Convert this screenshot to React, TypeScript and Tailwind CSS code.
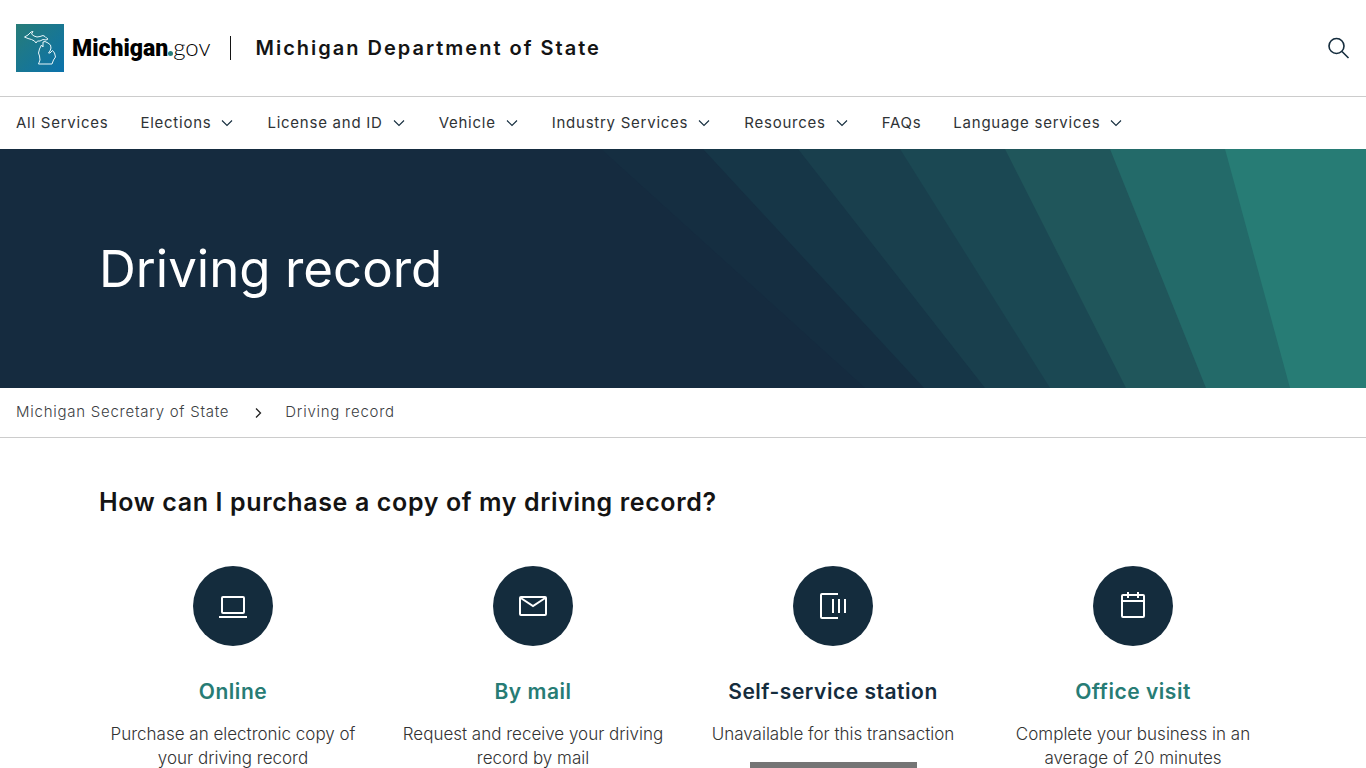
import React from 'react';

const navItems = [
  { label: 'All Services', menu: false },
  { label: 'Elections', menu: true },
  { label: 'License and ID', menu: true },
  { label: 'Vehicle', menu: true },
  { label: 'Industry Services', menu: true },
  { label: 'Resources', menu: true },
  { label: 'FAQs', menu: false },
  { label: 'Language services', menu: true },
];

// Stripes of the hero banner, from left to right
const stripes = [
  { points: '601,0 865,239 1366,239 1366,0', fill: '#152e41' },
  { points: '703,0 924,239 1366,239 1366,0', fill: '#163647' },
  { points: '798,0 985,239 1366,239 1366,0', fill: '#193f4d' },
  { points: '900,0 1050,239 1366,239 1366,0', fill: '#1b4853' },
  { points: '1005,0 1126,239 1366,239 1366,0', fill: '#20565b' },
  { points: '1110,0 1206,239 1366,239 1366,0', fill: '#236a69' },
  { points: '1225,0 1290,239 1366,239 1366,0', fill: '#277c75' },
];

const cards = [
  {
    title: 'Online',
    text: 'Purchase an electronic copy of your driving record',
    available: true,
    icon: (
      <>
        <rect x="6" y="8" width="22" height="16" rx="1" />
        <path d="M3 28H31" />
      </>
    ),
  },
  {
    title: 'By mail',
    text: 'Request and receive your driving record by mail',
    available: true,
    icon: (
      <>
        <rect x="4" y="8" width="26" height="18" rx="1" />
        <path d="M4 8.500L17 17L30 8.500" />
      </>
    ),
  },
  {
    title: 'Self-service station',
    text: 'Unavailable for this transaction',
    available: false,
    icon: <path d="M22 5H6Q5 5 5 6V28Q5 29 6 29H22M17 10V24M23 10V24M29 10V24" />,
  },
  {
    title: 'Office visit',
    text: 'Complete your business in an average of 20 minutes',
    available: true,
    icon: (
      <>
        <rect x="6" y="6" width="22" height="22" rx="1" />
        <path d="M6 12H28M12 3V9M22 3V9" />
      </>
    ),
  },
];

const Logo: React.FC = () => (
  <a href="#" aria-label="Michigan.gov" className="flex items-center gap-2">
    <svg className="h-12 w-12" viewBox="0 0 48 48" fill="none">
      <defs>
        <linearGradient id="logo" x1="0" y1="0" x2="1" y2="1">
          <stop offset="0" stopColor="#277c78" />
          <stop offset="1" stopColor="#0b72ac" />
        </linearGradient>
      </defs>
      <rect width="48" height="48" fill="url(#logo)" />
      <g stroke="#e8f6fa" strokeWidth="1" strokeLinejoin="round">
        {/* upper peninsula */}
        <path d="M8.500 13L12 11L15 8L17 7.500L15.500 10L18 12L21 13L24 12.500L27 11.500L29 12.500L30.500 14L32 15L30 16L27 15.500L24 17L21.500 17L20 19L18.500 17L15.500 15.500L12 14.500Z" />
        {/* lower peninsula */}
        <path d="M27 18L29 17.500L32 19L34.500 21L35 24L34 27L32.500 29L34 29L36.500 26.500L38.500 29L39.500 33L37.500 36L36 40H30L22.500 40L24 36L23.500 32L22.500 29L23.500 25L25.500 21L27 23Z" />
      </g>
    </svg>
    <span className="flex items-baseline font-['Roboto',sans-serif] text-[23px] leading-6 text-black">
      <b className="font-black">Michigan</b>
      <span className="h-[5px] w-[5px] rounded-full bg-[#277c78]" />
      <span className="font-['Lato',sans-serif] text-2xl leading-6 font-light">gov</span>
    </span>
  </a>
);

const App: React.FC = () => {
  return (
    <div className="h-screen overflow-hidden bg-white font-['Inter',sans-serif] text-[#141414]">
      <header>
        <div className="flex h-24 items-center px-4">
          <Logo />
          <div className="mr-6 ml-5 h-6 w-px bg-[#141414]" />
          <span className="text-xl font-semibold tracking-widest">Michigan Department of State</span>
          <button aria-label="Search" className="ml-auto">
            <svg className="h-6 w-6" viewBox="0 0 24 24" fill="none" stroke="#142c3d" strokeWidth="1.6">
              <circle cx="10.500" cy="10" r="7.500" />
              <path d="M16 15.500L22.500 22" />
            </svg>
          </button>
        </div>
        <nav className="flex h-[53px] items-center gap-8 border-t border-[#cccccc] px-4 text-[15px] tracking-wider text-[#2f3336]">
          {navItems.map((item) =>
            item.menu ? (
              <button key={item.label} className="flex items-center gap-2">
                {item.label}
                <svg className="h-4 w-4" viewBox="0 0 16 16" fill="none" stroke="#142c3d" strokeWidth="1.100">
                  <path d="M3 5.500L8 10.500L13 5.500" />
                </svg>
              </button>
            ) : (
              <a key={item.label} href="#">{item.label}</a>
            )
          )}
        </nav>
      </header>

      <section className="relative flex h-[239px] items-center bg-[#152b3f]">
        <svg className="absolute inset-0 h-full w-full" viewBox="0 0 1366 239" preserveAspectRatio="none">
          {stripes.map((stripe) => (
            <polygon key={stripe.fill} points={stripe.points} fill={stripe.fill} />
          ))}
        </svg>
        <div className="relative mx-auto w-full max-w-[1200px] px-4">
          <h1 className="text-[51px] leading-[52px] text-white">Driving record</h1>
        </div>
      </section>

      <nav aria-label="Breadcrumb" className="flex h-[50px] items-center gap-5 border-b border-[#cccccc] px-4 text-[15px] font-light tracking-wider text-[#3c4043]">
        <a href="#">Michigan Secretary of State</a>
        <svg className="h-4 w-4" viewBox="0 0 16 16" fill="none" stroke="#222222" strokeWidth="1.300">
          <path d="M7 3.500L11.500 8L7 12.500" />
        </svg>
        <span>Driving record</span>
      </nav>

      <main className="mx-auto max-w-[1200px] pt-12">
        <h2 className="px-4 text-[25px] leading-8 font-semibold tracking-wide">How can I purchase a copy of my driving record?</h2>
        <div className="mt-12 grid grid-cols-4">
          {cards.map((card) => (
            <div key={card.title} className="flex flex-col items-center px-4 text-center">
              <div className="flex h-20 w-20 items-center justify-center rounded-full bg-[#142c3d]">
                <svg className="h-[34px] w-[34px]" viewBox="0 0 34 34" fill="none" stroke="white" strokeWidth="2">
                  {card.icon}
                </svg>
              </div>
              <h3 className="mt-8 text-[21px] leading-7 font-semibold tracking-wide">
                {card.available ? (
                  <a href="#" className="text-[#277c75]">{card.title}</a>
                ) : (
                  <span className="text-[#142c3d]">{card.title}</span>
                )}
              </h3>
              <p className="mt-4 text-[17px] leading-6 font-light text-[#333333]">{card.text}</p>
              {!card.available && (
                <button disabled aria-label="Unavailable" className="mt-4 h-12 w-[167px] bg-[#757575]" />
              )}
            </div>
          ))}
        </div>
      </main>
    </div>
  );
};

export default App;
